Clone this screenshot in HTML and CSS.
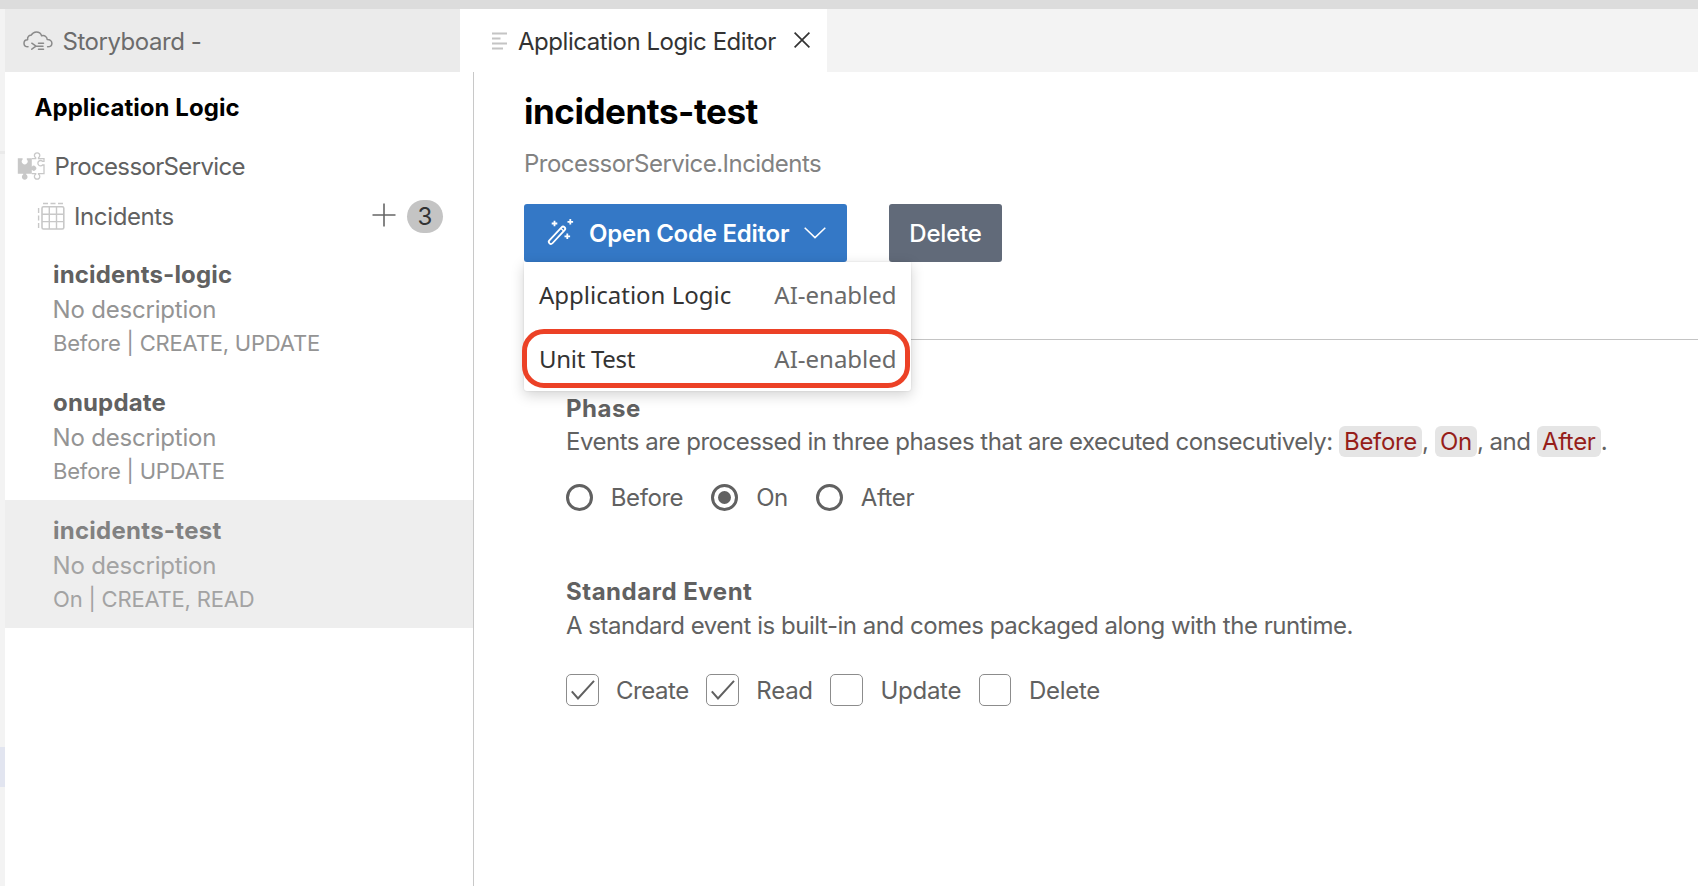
FILE: index.html
```
<!DOCTYPE html>
<html lang="en">
<head>
<meta charset="utf-8">
<title>Application Logic Editor</title>
<link rel="stylesheet" href="styles.css">
</head>
<body>
<div class="titlebar"></div>
<div class="workspace">
  <div class="rail"><span class="rail-line"></span><span class="rail-active"></span></div>
  <div class="window">
    <nav class="tabs">
      <div class="tab tab-story">
        <svg class="icon-cloud" width="30" height="20" viewBox="0 0 30 20" fill="none" stroke="#8a8a8a" stroke-width="1.5" stroke-linecap="round" stroke-linejoin="round">
          <path d="M5 15.800C2.600 15.800 1 14.300 1 12.200C1 10 2.700 8.700 4.600 8.700C4.200 5.500 6.300 3.900 8.200 4.200C9.500 2 11.200 1 13.300 1C16 1 17.900 2.500 18.600 4.800C21.500 4 24.200 5.600 24.200 8.600C27 8.500 28.900 9.900 28.900 12.200C28.900 14.500 27.300 15.800 24.600 15.800"/>
          <path d="M8.800 12.200L13 15.200L8.800 18.200M15.500 12.200H20.500M13.800 15.300H20M15.500 18.300H20.500"/>
        </svg>
        <span>Storyboard -</span>
      </div>
      <div class="tab tab-editor">
        <svg class="icon-lines" width="16" height="18" viewBox="0 0 16 18" stroke="#c4c4c4" stroke-width="1.900">
          <path d="M0 1.500H15M0 6.500H8.500M0 11.500H15M0 16.500H11"/>
        </svg>
        <span>Application Logic Editor</span>
        <svg class="icon-close" width="16" height="16" viewBox="0 0 16 16" stroke="#333" stroke-width="1.700"><path d="M.6.6L15.400 15.400M15.400.6L.6 15.400"/></svg>
      </div>
    </nav>
    <div class="panes">
      <aside class="sidebar">
        <h2 class="side-title">Application Logic</h2>
        <div class="tree-row service">
          <svg width="28" height="28" viewBox="0 0 28 28" fill="none" stroke="#c8c8c8" stroke-width="1.300">
            <path fill="#c8c8c8" stroke="none" d="M.8 6.200H5.600V7.500A2.900 2.900 0 1 0 9.800 7.500V6.200H14.800V14.700A2.500 2.500 0 1 1 14.800 17.800V21.800H9.200V22.600A2.800 2.800 0 1 1 6.200 22.600V21.800H.8Z"/>
            <path d="M14.800 6.600H18.700V5.800A2.700 2.700 0 1 1 21.500 5.800V6.600H27V9.400H25.600A2.700 2.700 0 1 0 25.600 13H27V21.600H21.500V22.200A2.700 2.700 0 1 1 18.700 22.200V21.600H14.800"/>
          </svg>
          <span>ProcessorService</span>
        </div>
        <div class="tree-row entity">
          <svg width="28" height="28" viewBox="0 0 28 28" fill="none" stroke="#c8c8c8" stroke-width="1.600">
            <rect x="5" y="4.800" width="21.800" height="22.200" rx="1.500"/>
            <path d="M12.300 5V27M19.500 5V27M5 12.300H27M5 19.600H27" stroke-width="1.400"/>
            <path d="M6 1.500H11M13.500 1.500H18.500M21 1.500H26M1.600 6V11M1.600 13.500V18.500M1.600 21V26" stroke-width="1.400"/>
          </svg>
          <span>Incidents</span>
          <svg class="icon-plus" width="24" height="24" viewBox="0 0 24 24" stroke="#666" stroke-width="1.600"><path d="M.5 12H23.500M12 .5V23.500"/></svg>
          <b class="count">3</b>
        </div>
        <ul class="handlers">
          <li class="handler">
            <strong>incidents-logic</strong>
            <span class="desc">No description</span>
            <span class="meta">Before | CREATE, UPDATE</span>
          </li>
          <li class="handler">
            <strong>onupdate</strong>
            <span class="desc">No description</span>
            <span class="meta">Before | UPDATE</span>
          </li>
          <li class="handler selected">
            <strong>incidents-test</strong>
            <span class="desc">No description</span>
            <span class="meta">On | CREATE, READ</span>
          </li>
        </ul>
      </aside>
      <main class="editor">
        <header class="editor-head">
          <h1>incidents-test</h1>
          <p class="path">ProcessorService.Incidents</p>
          <div class="actions">
            <div class="split">
              <button class="btn btn-open">
                <svg width="28" height="28" viewBox="0 0 28 28" fill="none" stroke="#fff" stroke-width="1.800">
                  <rect x="-2.100" y="-11" width="4.200" height="22" rx="2.100" transform="translate(10 17.300) rotate(43)"/>
                  <path d="M13.800 10.300L16.900 13.200" stroke-width="1.300"/>
                  <path d="M7.500 2.700V8.300M4.700 5.500H10.300M23.300 1V6.600M20.500 3.800H26.100M20.300 15.500V21.100M17.500 18.300H23.100"/>
                </svg>
                <span>Open Code Editor</span>
                <svg class="icon-chevron" width="22" height="12" viewBox="0 0 22 12" fill="none" stroke="#fff" stroke-width="1.500"><path d="M.7.7L11 10.600L21.300.7"/></svg>
              </button>
              <div class="menu">
                <div class="menu-item"><span>Application Logic</span><span class="hint">AI-enabled</span></div>
                <div class="menu-item marked"><span class="unit">Unit Test</span><span class="hint">AI-enabled</span></div>
              </div>
            </div>
            <button class="btn btn-delete">Delete</button>
          </div>
        </header>
        <section class="phase">
          <h3>Phase</h3>
          <p>Events are processed in three phases that are executed consecutively: <code>Before</code>, <code>On</code>, and <code>After</code>.</p>
          <div class="radios">
            <label><i class="radio"></i><span>Before</span></label>
            <label><i class="radio on"></i><span>On</span></label>
            <label><i class="radio"></i><span>After</span></label>
          </div>
        </section>
        <section class="events">
          <h3>Standard Event</h3>
          <p>A standard event is built-in and comes packaged along with the runtime.</p>
          <div class="checks">
            <label><i class="box"><svg width="24" height="20" viewBox="0 0 24 20" fill="none" stroke="#606060" stroke-width="2"><path d="M.8 11.300L7 18.500L23 .8"/></svg></i><span>Create</span></label>
            <label><i class="box"><svg width="24" height="20" viewBox="0 0 24 20" fill="none" stroke="#606060" stroke-width="2"><path d="M.8 11.300L7 18.500L23 .8"/></svg></i><span class="loose">Read</span></label>
            <label><i class="box"></i><span class="loose">Update</span></label>
            <label><i class="box"></i><span class="loose">Delete</span></label>
          </div>
        </section>
      </main>
    </div>
  </div>
</div>
</body>
</html>
```
FILE: styles.css
```
*, *::before, *::after { box-sizing: border-box; margin: 0; padding: 0; }
html, body { height: 100%; overflow: hidden; }
body {
  display: flex;
  flex-direction: column;
  background: #fff;
  color: #616161;
  font: 400 24px/30px Inter, "Liberation Sans", sans-serif;
  letter-spacing: -0.47px;
  white-space: nowrap;
}
svg { display: block; flex: none; }
.titlebar { height: 9px; flex: none; background: #dcdcdc; }
.workspace { display: flex; flex: 1; min-height: 0; }
.rail { width: 5px; flex: none; background: #f3f3f3; display: flex; flex-direction: column; }
.rail-line { height: 3px; margin-top: 142px; background: #eaeaea; }
.rail-active { height: 40px; margin-top: 593px; background: #e2e5f0; }
.window { flex: 1; min-width: 0; display: flex; flex-direction: column; }

.tabs { display: flex; height: 63px; flex: none; background: #f3f3f3; }
.tab { display: flex; align-items: center; }
.tab span { padding-top: 2px; }
.tab-story { width: 455px; padding-left: 17.500px; background: #ebebeb; color: #6c6c6c; }
.icon-cloud { margin-right: 10px; }
.tab-editor { width: 367px; padding-left: 32px; background: #fff; color: #333; }
.tab-editor span { letter-spacing: -0.46px; margin-left: 10px; }
.icon-close { margin-left: 18px; margin-bottom: 2px; }

.panes { display: flex; flex: 1; min-height: 0; }
.sidebar { width: 469px; flex: none; border-right: 1px solid #c8c8c8; padding-top: 21px; }
.side-title { padding-left: 29.5px; margin-bottom: 18px; font-size: 24px; font-weight: 700; letter-spacing: 0.06px; color: #000; }
.tree-row { display: flex; align-items: center; height: 50px; }
.tree-row span { padding-top: 2px; }
.service { padding-left: 12px; letter-spacing: -0.64px; }
.service span { margin-left: 9.500px; }
.entity { padding: 0 30px 0 32px; letter-spacing: -0.38px; }
.entity svg + span { margin-left: 9px; }
.icon-plus { margin-left: auto; margin-bottom: 3px; }
.count {
  width: 36px; height: 33px; margin-left: 11px; border-radius: 17px;
  background: #c4c4c4; color: #333; text-align: center; font-weight: 400; line-height: 34px; letter-spacing: 0;
}
.handlers { list-style: none; margin-top: 3px; }
.handler { display: flex; flex-direction: column; height: 128px; padding: 16px 0 0 48px; }
.handler strong { font-weight: 700; letter-spacing: 0.17px; }
.desc { margin: 5px 0 3px -0.500px; letter-spacing: -0.19px; color: #949494; }
.meta { font-size: 22px; letter-spacing: -0.19px; color: #949494; }
.selected { background: #eee; color: #818181; }
.selected strong { letter-spacing: 0.26px; }
.selected .desc, .selected .meta { color: #a3a3a3; }

.editor { flex: 1; padding-top: 17px; }
.editor-head { height: 251px; margin-left: 50px; border-bottom: 1px solid #c4c4c4; }
h1 { font-size: 35px; line-height: 44px; font-weight: 700; letter-spacing: -0.46px; color: #000; }
.path { margin: 16px 0 25px; letter-spacing: -0.527px; color: #828282; }
.actions { display: flex; gap: 42px; }
.split { position: relative; }
.btn { height: 58px; border: 0; border-radius: 3px; color: #fff; font: inherit; }
.btn-open {
  display: flex; align-items: center; width: 323px; padding-left: 23px;
  background: #3478c6; font-weight: 600; letter-spacing: -0.24px;
}
.btn-open svg:first-child { margin-bottom: 3px; }
.btn-open span { margin-left: 14px; padding-top: 1px; }
.icon-chevron { margin-left: 15px; margin-bottom: 1px; }
.btn-delete { width: 113px; padding-top: 2px; background: #616a79; font-weight: 500; letter-spacing: -0.2px; }
.menu {
  position: absolute; top: 58px; left: 0; z-index: 1;
  width: 387px; height: 129px; padding-top: 1px; border-radius: 0 0 3px 3px; background: #fff;
  box-shadow: 0 4px 14px rgba(0, 0, 0, 0.18), 0 0 2px rgba(0, 0, 0, 0.12);
  font-family: "Noto Sans", "Open Sans", sans-serif; letter-spacing: 0; color: #333;
}
.menu-item { position: relative; display: flex; justify-content: space-between; align-items: center; height: 64px; padding: 0 14.400px 0 15px; }
.unit { letter-spacing: -0.3px; }
.hint { color: #6a6a6a; }
.marked::after {
  content: ""; position: absolute; left: -2px; right: 1px; top: 2px; height: 59px;
  border: 5px solid #ec4126; border-radius: 22px;
}

section { padding-left: 92px; }
h3 { font-size: 24px; font-weight: 700; letter-spacing: 0.52px; }
.phase { padding-top: 54px; }
.phase p { margin-top: 1px; line-height: 34px; letter-spacing: -0.485px; }
code { padding: 1px 5.200px; border-radius: 6px; background: #e5e5e5; color: #961e1a; font: inherit; letter-spacing: -0.36px; }
label { display: flex; align-items: center; }
label span { padding-top: 2px; }
.radios, .checks { display: flex; align-items: center; }
.radios { gap: 28.200px; margin-top: 23px; height: 30px; letter-spacing: -0.42px; }
.radios label { gap: 17.800px; }
.radio { width: 27px; height: 27px; border: 3px solid #616161; border-radius: 50%; display: flex; }
.radio.on::after { content: ""; width: 13px; height: 13px; margin: auto; border-radius: 50%; background: #616161; }
.events { padding-top: 65px; }
.events p { margin-top: 4px; }
.checks { gap: 17.700px; margin-top: 33px; height: 32px; }
.checks label { gap: 17.500px; }
.box { width: 32.500px; height: 32px; border: 1px solid #8c8c8c; border-radius: 5px; display: flex; }
.box svg { margin: 5px 0 0 4px; }
.loose { letter-spacing: -0.27px; }
```
